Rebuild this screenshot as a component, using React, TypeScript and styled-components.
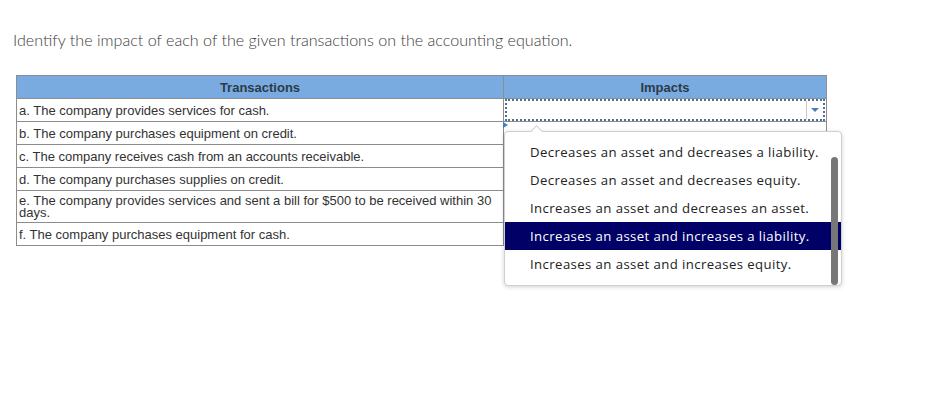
import React from 'react';
import styled, { createGlobalStyle } from 'styled-components';

const GlobalStyle = createGlobalStyle`
  html, body {
    margin: 0;
    padding: 0;
    background: #fff;
  }
`;

const Page = styled.div`
  padding: 30px 0 0 13px;
  width: 925px;
  height: 401px;
  box-sizing: border-box;
`;

const Prompt = styled.p`
  margin: 0 0 25px 0;
  font-family: Lato, 'Open Sans', sans-serif;
  font-size: 16.1px;
  font-weight: 300;
  color: #3c3c3c;
  line-height: 20px;
`;

const TableWrap = styled.div`
  position: relative;
  margin-left: 3px;
  width: 808px;
`;

const Table = styled.table`
  border-collapse: collapse;
  width: 808px;
  font-family: 'Liberation Sans', Arial, sans-serif;
  font-size: 13px;
  color: #333;
  table-layout: fixed;
`;

const HeadCell = styled.th<{ $w: number }>`
  width: ${p => p.$w}px;
  background: #79abe1;
  border: 1px solid #8a8f96;
  height: 22px;
  padding: 0;
  font-weight: bold;
  font-size: 13px;
  color: #2d3a48;
  text-align: center;
`;

const Cell = styled.td<{ $tall?: boolean }>`
  border: 1px solid #8c8c8c;
  padding: 1px 2px 0;
  height: ${p => (p.$tall ? 30 : 21)}px;
  line-height: 12px;
  vertical-align: middle;
  color: #333;
`;

const SelectCell = styled.td`
  border: 1px solid #8c8c8c;
  padding: 0;
  height: 22px;
`;

const SelectBox = styled.div`
  display: flex;
  margin: 0 1px;
  border: 2px dotted #4c6f96;
  box-sizing: border-box;
  height: 22px;
`;

const SelectValue = styled.div`
  flex: 1;
`;

const ArrowBox = styled.div`
  width: 16px;
  border-left: 1px solid #c8c8c8;
  display: flex;
  align-items: center;
  justify-content: center;
`;

const Arrow = styled.div`
  width: 0;
  height: 0;
  border-left: 4px solid transparent;
  border-right: 4px solid transparent;
  border-top: 4px solid #4d7db2;
`;

const Marker = styled.div`
  position: absolute;
  left: 487px;
  top: 47px;
  width: 0;
  height: 0;
  border-top: 3px solid transparent;
  border-bottom: 3px solid transparent;
  border-left: 5px solid #3f7ec6;
`;

const Popup = styled.div`
  position: absolute;
  left: 488px;
  top: 56px;
  width: 338px;
  height: 155px;
  box-sizing: border-box;
  background: #fff;
  border: 1px solid #cfcfcf;
  border-radius: 4px;
  box-shadow: 0 1px 4px rgba(0, 0, 0, 0.18);
  padding-top: 6px;
`;

const Notch = styled.div`
  position: absolute;
  left: 27px;
  top: -5px;
  width: 8px;
  height: 8px;
  background: #fff;
  border-left: 1px solid #cfcfcf;
  border-top: 1px solid #cfcfcf;
  transform: rotate(45deg);
`;

const Option = styled.div<{ $active?: boolean }>`
  height: 28px;
  line-height: 28px;
  padding-left: 25px;
  font-family: 'Open Sans', 'Noto Sans', sans-serif;
  font-size: 13.2px;
  letter-spacing: 0.4px;
  color: ${p => (p.$active ? '#fff' : '#222')};
  background: ${p => (p.$active ? '#000066' : 'transparent')};
  white-space: nowrap;
`;

const Scrollbar = styled.div`
  position: absolute;
  right: 3px;
  top: 25px;
  width: 7px;
  height: 128px;
  border-radius: 4px;
  background: #777;
`;

const transactions = [
  'a. The company provides services for cash.',
  'b. The company purchases equipment on credit.',
  'c. The company receives cash from an accounts receivable.',
  'd. The company purchases supplies on credit.',
  'e. The company provides services and sent a bill for $500 to be received within 30 days.',
  'f. The company purchases equipment for cash.',
];

const options = [
  'Decreases an asset and decreases a liability.',
  'Decreases an asset and decreases equity.',
  'Increases an asset and decreases an asset.',
  'Increases an asset and increases a liability.',
  'Increases an asset and increases equity.',
];

const App = () => {
  return (
    <>
      <GlobalStyle />
      <Page>
        <Prompt>Identify the impact of each of the given transactions on the accounting equation.</Prompt>
        <TableWrap>
          <Table>
            <thead>
              <tr>
                <HeadCell $w={486}>Transactions</HeadCell>
                <HeadCell $w={322}>Impacts</HeadCell>
              </tr>
            </thead>
            <tbody>
              {transactions.map((t, i) => (
                <tr key={t}>
                  <Cell $tall={i === 4}>{t}</Cell>
                  {i === 0 ? (
                    <SelectCell>
                      <SelectBox>
                        <SelectValue />
                        <ArrowBox>
                          <Arrow />
                        </ArrowBox>
                      </SelectBox>
                    </SelectCell>
                  ) : (
                    <Cell />
                  )}
                </tr>
              ))}
            </tbody>
          </Table>
          <Marker />
          <Popup>
            <Notch />
            {options.map((o, i) => (
              <Option key={o} $active={i === 3}>
                {o}
              </Option>
            ))}
            <Scrollbar />
          </Popup>
        </TableWrap>
      </Page>
    </>
  );
};

export default App;
